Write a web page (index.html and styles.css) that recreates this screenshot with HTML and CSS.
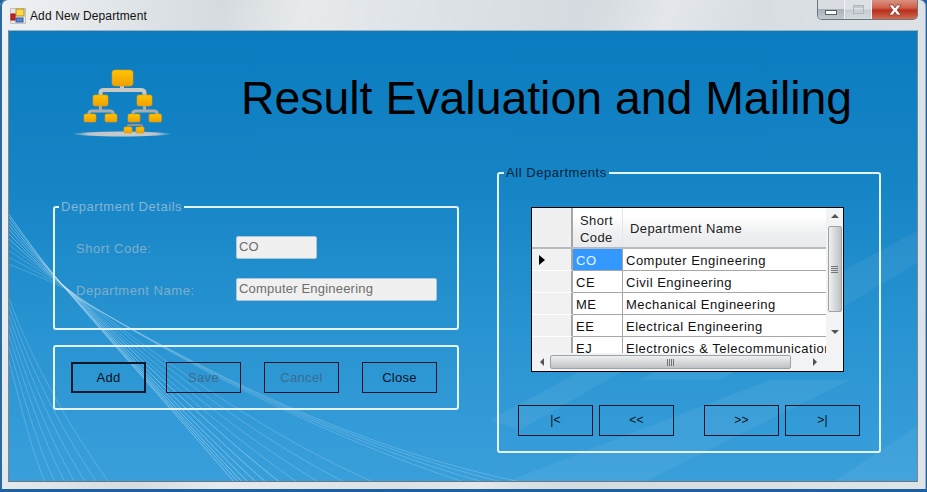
FILE: index.html
```html
<!DOCTYPE html>
<html lang="en">
<head>
<meta charset="utf-8">
<title>Add New Department</title>
<link rel="stylesheet" href="styles.css">
</head>
<body>
<div class="window">
  <header class="titlebar">
    <svg class="app-icon" width="16" height="16" viewBox="0 0 16 16">
      <rect x="0.5" y="0.5" width="15" height="15" fill="#e8e8e8" stroke="#c4c4c4"/>
      <rect x="6" y="1" width="8" height="7" fill="#fbd94a" stroke="#b98f20"/>
      <rect x="1" y="6" width="4" height="6" fill="#d82020" stroke="#8c1010"/>
      <rect x="6" y="10" width="7" height="4" fill="#5b86d8" stroke="#34589c"/>
    </svg>
    <span class="window-title">Add New Department</span>
    <div class="caption-buttons">
      <span class="cap cap-min"><i></i></span>
      <span class="cap cap-max"><i></i></span>
      <span class="cap cap-close">
        <svg width="16" height="12" viewBox="0 0 16 12"><path d="M2 1h4l2 3 2-3h4l-4 5 4 5h-4l-2-3-2 3H2l4-5z" fill="#fff" stroke="#7a3b30" stroke-width=".7"/></svg>
      </span>
    </div>
  </header>

  <main class="client">
    <svg class="backdrop" viewBox="8 30 911 454" preserveAspectRatio="none" aria-hidden="true">
      <g class="rays-strong">
        <path d="M8 213C24 236 40 258 58 280S150 385 236 484"/>
        <path d="M8 216C24 238 40 259 59 281S152 387 240 484"/>
        <path d="M8 220C24 241 41 261 60 282S155 389 244 484"/>
        <path d="M8 224C24 244 42 263 61 283S158 391 250 484"/>
        <path d="M8 228C24 247 42 265 62 284S162 394 258 484"/>
        <path d="M8 233C24 250 42 267 63 285S168 397 268 484"/>
        <path d="M8 238C24 253 42 269 64 286S176 400 282 484"/>
      </g>
      <g class="rays-mid">
        <path d="M8 244C24 257 43 271 65 287S186 405 300 484"/>
        <path d="M8 250C24 261 44 273 66 288S198 410 322 484"/>
        <path d="M8 257C26 266 44 276 67 289S212 415 348 484"/>
        <path d="M8 264C28 272 46 279 68 290S228 420 378 484"/>
      </g>
      <g class="rays-faint">
        <path d="M8 296C30 356 62 416 110 484"/>
        <path d="M8 304C28 362 56 422 98 484"/>
        <path d="M8 313C27 368 50 428 87 484"/>
        <path d="M8 322C25 374 46 434 76 484"/>
        <path d="M8 332C24 382 42 440 66 484"/>
        <path d="M8 344C22 390 36 444 56 484"/>
        <path d="M8 358C20 400 30 448 46 484"/>
        <path d="M70 292C170 356 320 436 470 484"/>
        <path d="M72 294C180 360 330 440 490 484"/>
        <path d="M74 296C190 364 340 444 510 484"/>
        <path d="M76 298C200 368 350 448 530 484"/>
      </g>
      <g class="sweeps">
        <path d="M500 484L770 380H850L640 484z"/>
        <path d="M640 380L919 230V262L720 380z"/>
        <path d="M830 484L919 425V484z"/>
        <path d="M490 420L620 350H660L520 430z"/>
      </g>
    </svg>

    <div class="banner">
      <svg class="logo" width="100" height="68" viewBox="0 0 100 68">
        <defs>
          <linearGradient id="orange" x1="0" y1="0" x2="0" y2="1">
            <stop offset="0" stop-color="#ffc400"/><stop offset="1" stop-color="#eea000"/>
          </linearGradient>
          <radialGradient id="shadow"><stop offset="0" stop-color="#c9cccb"/><stop offset=".7" stop-color="#bfc6ca"/><stop offset="1" stop-color="#bfc6ca" stop-opacity="0"/></radialGradient>
        </defs>
        <ellipse cx="50" cy="65" rx="50" ry="3" fill="url(#shadow)"/>
        <g fill="none" stroke="#c8c8c4" stroke-width="4">
          <path d="M50 16v5M28.5 27v-3q0-3 3-3h37q4 0 4 3v3"/>
        </g>
        <g fill="none" stroke="#a9adb0" stroke-width="3">
          <path d="M28.5 37v4M17 46v-2q0-2 3-2h18q3 0 3 2v2M72.5 37v4M61 46v-2q0-2 3-2h18q3 0 3 2v2"/>
        </g>
        <path d="M56 59v-2q0-1 2-1h10q2 0 2 1v2" fill="none" stroke="#8f9498" stroke-width="2"/>
        <g fill="url(#orange)" stroke="#e09a10" stroke-width=".6">
          <rect x="40" y="1" width="21" height="16" rx="3"/>
          <rect x="21" y="26" width="15" height="11" rx="2"/>
          <rect x="65" y="26" width="15" height="11" rx="2"/>
          <rect x="12" y="45" width="12" height="8" rx="1.5"/>
          <rect x="33" y="45" width="12" height="8" rx="1.5"/>
          <rect x="56" y="45" width="12" height="8" rx="1.5"/>
          <rect x="77" y="45" width="12.500" height="8" rx="1.5"/>
          <rect x="52" y="58" width="8" height="6" rx="1"/>
          <rect x="64" y="58" width="8" height="6" rx="1"/>
        </g>
      </svg>
      <h1 class="app-title">Result Evaluation and Mailing</h1>
    </div>

    <div class="columns">
      <section class="left-col">
        <fieldset class="group details" disabled>
          <legend>Department Details</legend>
          <div class="field">
            <label class="field-label">Short Code:</label>
            <input class="text-input code-input" type="text" value="CO" disabled>
          </div>
          <div class="field">
            <label class="field-label">Department Name:</label>
            <input class="text-input name-input" type="text" value="Computer Engineering" disabled>
          </div>
        </fieldset>
        <div class="group actions">
          <button class="btn btn-default">Add</button>
          <button class="btn" disabled>Save</button>
          <button class="btn" disabled>Cancel</button>
          <button class="btn">Close</button>
        </div>
      </section>

      <section class="right-col">
        <fieldset class="group all-depts">
          <legend>All Departments</legend>
          <div class="datagrid">
            <div class="grid-body">
              <div class="grid-rows">
                <div class="row row-head">
                  <div class="hdr-corner"></div>
                  <div class="hdr hdr-code">Short<br>Code</div>
                  <div class="hdr hdr-name">Department Name</div>
                </div>
                <div class="row">
                  <div class="row-hdr"><span class="arrow"></span></div>
                  <div class="cell cell-code selected">CO</div>
                  <div class="cell">Computer Engineering</div>
                </div>
                <div class="row">
                  <div class="row-hdr"></div>
                  <div class="cell cell-code">CE</div>
                  <div class="cell">Civil Engineering</div>
                </div>
                <div class="row">
                  <div class="row-hdr"></div>
                  <div class="cell cell-code">ME</div>
                  <div class="cell">Mechanical Engineering</div>
                </div>
                <div class="row">
                  <div class="row-hdr"></div>
                  <div class="cell cell-code">EE</div>
                  <div class="cell">Electrical Engineering</div>
                </div>
                <div class="row">
                  <div class="row-hdr"></div>
                  <div class="cell cell-code">EJ</div>
                  <div class="cell">Electronics &amp; Telecommunications</div>
                </div>
              </div>
              <div class="vscroll">
                <span class="sb-arrow up"></span>
                <div class="vthumb"><i></i></div>
                <span class="sb-arrow down"></span>
              </div>
            </div>
            <div class="hscroll">
              <span class="sb-arrow left"></span>
              <div class="hthumb"><i></i></div>
              <span class="sb-arrow right"></span>
            </div>
          </div>
          <div class="pager">
            <button class="btn">|&lt;</button>
            <button class="btn">&lt;&lt;</button>
            <button class="btn pager-next">&gt;&gt;</button>
            <button class="btn">&gt;|</button>
          </div>
        </fieldset>
      </section>
    </div>
  </main>
</div>
</body>
</html>
```
FILE: styles.css
```css
* { box-sizing: border-box; }
html, body { margin: 0; height: 100%; }
body { font-family: "Liberation Sans", Arial, sans-serif; background: #1d5f9f; overflow: hidden; }

.window {
  width: 926px; height: 489px;
  padding: 0 8px 7px;
  border-radius: 6px 6px 0 0;
  display: flex; flex-direction: column;
  background:
    linear-gradient(112deg, transparent 0 52%, rgba(255,255,255,.35) 60%, transparent 68%),
    linear-gradient(100deg, #eef2f4 0%, #d6dbdf 22%, #e6eaed 30%, #d3d9de 60%, #dfe4e8 100%);
  box-shadow: inset 2px 0 0 #2b6a9f, inset -1px 0 0 #9fb2c0;
}
.titlebar { height: 30px; flex: none; display: flex; align-items: flex-start; }
.app-icon { margin: 8px 0 0 2px; flex: none; }
.window-title { margin: 9px 0 0 4px; font-size: 12px; line-height: 14px; letter-spacing: .12px; color: #111; }
.caption-buttons {
  margin-left: auto; display: flex; height: 20px;
  border: 1px solid #6b7680; border-top: 0; border-radius: 0 0 5px 5px; overflow: hidden;
}
.cap { display: flex; align-items: center; justify-content: center; height: 19px; }
.cap-min, .cap-max { width: 27px; background: linear-gradient(#d9dde1 0 45%, #a9b0b7 50%, #c4cad0 100%); border-right: 1px solid #eef; }
.cap-min i { width: 12px; height: 5px; margin-top: 6px; background: #fff; border: 1px solid #56606a; }
.cap-max { background: linear-gradient(#dde1e5 0 48%, #c6ccd2 52%, #d5dade 100%); }
.cap-max i { width: 11px; height: 9px; border: 1px solid #aeb5bc; box-shadow: inset 0 2px 0 #c3c9cf; }
.cap-close { width: 45px; background: linear-gradient(#d89282 0, #d1604a 40%, #b8301e 55%, #d26a50 100%); }

.client {
  position: relative; flex: 1; overflow: hidden;
  border: 1px solid #7c868e; border-top-color: #9fb0bc; border-bottom-color: #6d767d;
  background: linear-gradient(#0a7cbf 0%, #1685c6 35%, #2a95d2 70%, #399fdb 100%);
}
.backdrop { position: absolute; inset: -1px; width: 911px; height: 454px; }
.rays-strong path { fill: none; stroke: #e2f3fc; stroke-opacity: .5; stroke-width: .8; }
.rays-mid path { fill: none; stroke: #e2f3fc; stroke-opacity: .28; stroke-width: .8; }
.rays-faint path { fill: none; stroke: #cfeaf8; stroke-opacity: .3; stroke-width: .8; }
.sweeps path { fill: #fff; fill-opacity: .06; }

.banner { position: relative; display: flex; align-items: flex-start; height: 134px; }
.logo { flex: none; margin: 38px 0 0 63px; }
.app-title {
  margin: 38px 0 0 69px; font-size: 46.4px; line-height: 58px;
  font-weight: 400; color: #000; white-space: nowrap;
}

.columns { position: relative; display: flex; align-items: flex-start; }
.left-col { width: 406px; margin: 34px 0 0 44px; display: flex; flex-direction: column; gap: 15px; flex: none; }
.right-col { width: 384px; margin: 0 0 0 38px; flex: none; }

.group { margin: 0; border: 2px solid #e4f3fb; border-radius: 3px; min-width: 0; }
.group legend { padding: 0 2px; font-size: 13px; line-height: 15px; letter-spacing: .55px; }
.details { height: 131px; padding: 22px 20px 0 21px; }
.details legend { color: #87b5d2; margin-left: -17px; }
.field { display: flex; align-items: center; height: 23px; margin-bottom: 19px; }
.field-label { width: 160px; font-size: 13px; letter-spacing: .55px; color: #7faecb; padding-top: 2px; }
.text-input {
  height: 23px; padding: 0 2px 2px; font: 13px "Liberation Sans", Arial, sans-serif; letter-spacing: .2px;
  color: #6d6d6d; background: #f0f0f0; border: 1px solid #a9c6da; border-radius: 2px;
}
.text-input:disabled { color: #6d6d6d; background: #f0f0f0; }
.code-input { width: 81px; }
.name-input { width: 201px; }

.actions { height: 65px; display: flex; align-items: center; gap: 23px; padding-left: 16px; }
.btn {
  width: 75px; height: 31px; padding: 0; font: 13px "Liberation Sans", Arial, sans-serif; letter-spacing: .3px;
  color: #04121e; background: transparent; border: 1px solid #04172b; border-radius: 0;
}
.btn:disabled { color: #3a6d8e; }
.btn-default { border-width: 2px; margin-right: -3px; }

.all-depts { height: 288px; padding: 27px 19px 0 19px; }
.all-depts legend { color: #06233a; margin-left: -14px; }
.datagrid {
  width: 313px; height: 165px; margin-left: 13px;
  display: flex; flex-direction: column;
  background: #fff; border: 1px solid #000; border-width: 1px 1px 1px 1px;
}
.grid-body { flex: 1; display: flex; min-height: 0; }
.grid-rows { flex: 1; min-width: 0; overflow: hidden; }
.row { display: flex; height: 22px; }
.row-head { height: 41px; background: linear-gradient(#fff 0 25%, #f0f1f2 60%, #e8eaec); border-bottom: 2px solid #b8bcc0; }
.hdr-corner, .row-hdr { width: 41px; flex: none; border-right: 2px solid #a6a6a6; background: #f0f0f0; }
.row-hdr { border-bottom: 1px solid #fff; background: #f1f1f1; display: flex; align-items: center; padding-left: 7px; }
.arrow { width: 0; height: 0; border-left: 6px solid #000; border-top: 5px solid transparent; border-bottom: 5px solid transparent; }
.hdr { font-size: 13px; line-height: 17px; letter-spacing: .4px; color: #222; display: flex; align-items: center; }
.hdr-code { width: 50px; flex: none; padding: 2px 0 0 7px; border-right: 1px solid #e4e6e8; }
.hdr-name { flex: 1; padding: 2px 0 0 7px; white-space: nowrap; }
.cell {
  flex: 1; min-width: 0; padding: 2px 0 0 3px; font-size: 13px; line-height: 20px; letter-spacing: .5px;
  color: #111; white-space: nowrap; overflow: hidden;
  border-right: 0; border-bottom: 1px solid #a6a6a6;
}
.cell-code { width: 50px; flex: none; border-right: 1px solid #a6a6a6; }
.selected { background: #3399ff; color: #e8f3ff; }

.vscroll { width: 17px; flex: none; display: flex; flex-direction: column; align-items: center; background: #f2f3f4; }
.vthumb {
  width: 14px; height: 86px; margin-top: 8px; display: flex; align-items: center; justify-content: center;
  background: linear-gradient(90deg, #eef0f1, #d4d6d8 55%, #bfc2c5); border: 1px solid #9da2a6; border-radius: 2px;
}
.vthumb i { width: 7px; height: 7px; background: repeating-linear-gradient(#6f7479 0 1px, transparent 1px 2px); }
.hscroll { height: 18px; flex: none; display: flex; align-items: center; background: #f2f3f4; }
.hthumb {
  width: 241px; height: 14px; margin-left: 6px; display: flex; align-items: center; justify-content: center;
  background: linear-gradient(#eef0f1, #d4d6d8 55%, #bfc2c5); border: 1px solid #9da2a6; border-radius: 2px;
}
.hthumb i { width: 7px; height: 7px; background: repeating-linear-gradient(90deg, #6f7479 0 1px, transparent 1px 2px); }
.sb-arrow { width: 0; height: 0; flex: none; border: 4px solid transparent; }
.sb-arrow.up { border-top: 0; border-bottom-color: #555; margin-top: 6px; }
.sb-arrow.down { border-bottom: 0; border-top-color: #555; margin-top: 18px; }
.sb-arrow.left { border-left: 0; border-right-color: #555; margin-left: 8px; }
.sb-arrow.right { border-right: 0; border-left-color: #555; margin-left: 22px; }

.pager { display: flex; gap: 6px; margin-top: 33px; }
.pager .btn { font-size: 12px; line-height: 12px; padding-bottom: 2px; }
.pager-next { margin-left: 24px; }
```
